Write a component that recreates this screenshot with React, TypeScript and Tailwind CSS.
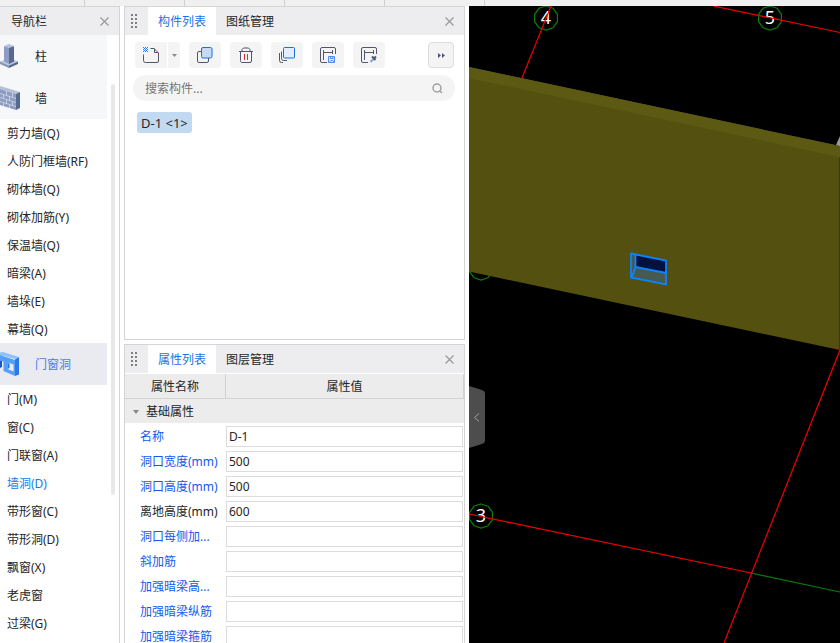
import { useState } from "react";
import type { ReactNode } from "react";
import clsx from "clsx";

type NavEntry = { label: string; icon?: ReactNode };

type Property = { label: string; value: string; plain?: boolean };

function ColumnIcon() {
  return (
    <svg viewBox="0 0 20 26" className="h-[26px] w-5 shrink-0" aria-hidden="true">
      <path d="M0 18.5 9 15l9 3.5-9 4z" fill="#bcc6dc" />
      <path d="M0 18.5 9 22.5V25L0 21z" fill="#8795b8" />
      <path d="M18 18.5 9 22.5V25l9-4z" fill="#566a91" />
      <path d="M4 3v15.5l5 2.500V4.5z" fill="#8d9cc0" />
      <path d="M14 3v15.5L9 21V4.5z" fill="#566a91" />
      <path d="M4 3l5-2 5 2-5 2z" fill="#b5c0da" />
    </svg>
  );
}

function WallIcon() {
  return (
    <svg viewBox="0 0 20 26" className="h-[26px] w-5 shrink-0" aria-hidden="true">
      <path d="M0 1 20 7l-4 2L0 4z" fill="#b5bfd6" />
      <path d="M0 4l16 5v16L0 20z" fill="#8d9cc0" />
      <path d="M20 7l-4 2v16l4-2z" fill="#566a91" />
      <path
        d="M0 8.500l16 5M0 12.500l16 5M0 16.500l16 5M6.500 6v4.500M12.500 8v4.500M3.500 9.500V14M9.500 11.500V16M6.500 14.500V19M12.500 16.500V21M3.500 17.500V21M9.500 19.500V23"
        stroke="#c3cce0"
        strokeWidth="1"
        fill="none"
      />
    </svg>
  );
}

function OpeningIcon() {
  return (
    <svg viewBox="0 0 20 26" className="h-[26px] w-5 shrink-0" aria-hidden="true">
      <path d="M0 1.500l3-.5 16 5-4 2L0 4z" fill="#8fc1fb" />
      <path
        d="M0 4l15 5v16L3.500 20V10.500L0 9.500zM7.500 11.500v6.500l6 2.500V13.500z"
        fill="#559ff6"
        fillRule="evenodd"
      />
      <path d="M19 6l-4 2.500V25l4-1.500z" fill="#2779ea" />
      <path d="M0 9.500l2 .500v6l-2 1z" fill="#1557cf" />
      <path d="M7.500 11.500l2 1.500v4l-2 1z" fill="#2475e8" />
    </svg>
  );
}

function NewIcon() {
  return (
    <svg viewBox="0 0 16 16" className="h-4 w-4" fill="none" aria-hidden="true">
      <path d="M.5 7.500v6a2 2 0 0 0 2 2H14a1.500 1.500 0 0 0 1.500-1.500V6L11 1.500H7.500" stroke="#4f566e" />
      <path d="M11.500 1.500V5.500H15" stroke="#4f566e" />
      <path d="M0 .5h5M0 2.500h5M0 4.500h5" stroke="#2b7fe8" strokeDasharray="1 1" />
      <path d="M1 1.500h4M1 3.500h4" stroke="#2b7fe8" strokeDasharray="1 1" />
    </svg>
  );
}

function CopyIcon() {
  return (
    <svg viewBox="0 0 16 16" className="h-4 w-4" fill="none" aria-hidden="true">
      <rect x=".5" y="4.500" width="11" height="11" rx="1.500" stroke="#4f566e" />
      <rect x="4.500" y=".5" width="10.500" height="10.500" rx="1.500" fill="#c7d9f5" stroke="#1a6fe0" />
    </svg>
  );
}

function TrashIcon() {
  return (
    <svg viewBox="0 0 16 16" className="h-4 w-4" fill="none" aria-hidden="true">
      <path
        d="M1 4.500h14M4 4V2.500L5.500 1h5L12 2.500V4M2.500 4.500v9A1.500 1.500 0 0 0 4 15.500h8a1.500 1.500 0 0 0 1.500-1.500V4.500"
        stroke="#4f566e"
      />
      <path d="M6.500 7v6M9.500 7v6" stroke="#e02a35" />
    </svg>
  );
}

function LayersIcon() {
  return (
    <svg viewBox="0 0 16 16" className="h-4 w-4" fill="none" aria-hidden="true">
      <path d="M.5 6v7.500a2 2 0 0 0 2 2H4M2.500 4.500v7a2 2 0 0 0 2 2H8" stroke="#4f566e" />
      <rect x="4.500" y=".5" width="11" height="10.500" rx="1" fill="#e3edfb" stroke="#1a6fe0" />
    </svg>
  );
}

function SaveIcon() {
  return (
    <svg viewBox="0 0 16 16" className="h-4 w-4" fill="none" aria-hidden="true">
      <path d="M7 15.500H2A1.500 1.500 0 0 1 .5 14V2A1.500 1.500 0 0 1 2 .5h12A1.500 1.500 0 0 1 15.500 2v5" stroke="#4f566e" />
      <path d="M3.500 3v10M3.500 5.500h8.500M12.500 3v4" stroke="#4f566e" />
      <path d="M8.500 9.500h6v6h-6z" fill="#dbe9fc" stroke="#4a90ee" />
      <path d="M10.500 9.500v2h2.500v-2M9.500 15l1.500-1.500h1.500L14 15" stroke="#4a90ee" />
    </svg>
  );
}

function PickIcon() {
  return (
    <svg viewBox="0 0 16 16" className="h-4 w-4" fill="none" aria-hidden="true">
      <path d="M7 15.500H2A1.500 1.500 0 0 1 .5 14V2A1.500 1.500 0 0 1 2 .5h12A1.500 1.500 0 0 1 15.500 2v5" stroke="#4f566e" />
      <path d="M3.500 3v10M3.500 5.500h8.500M12.500 3v4" stroke="#4f566e" />
      <path d="M9.500 15l4-4" stroke="#7fa6dc" strokeWidth="2" />
      <path d="M11 9.500l3.500 3.500M13 11.500l2-2" stroke="#4f566e" strokeWidth="2" />
    </svg>
  );
}

function CloseIcon() {
  return (
    <svg viewBox="0 0 9 9" className="h-[9px] w-[9px]" aria-hidden="true">
      <path d="M.5 .5l8 8M8.500 .5l-8 8" stroke="#999" strokeWidth="1.200" />
    </svg>
  );
}

function Grip() {
  return (
    <svg viewBox="0 0 6 14" className="h-[14px] w-[6px]" fill="#808080" aria-hidden="true">
      {[0, 4, 8, 12].map((y) => (
        <g key={y}>
          <rect x="0" y={y} width="2" height="2" />
          <rect x="4" y={y} width="2" height="2" />
        </g>
      ))}
    </svg>
  );
}

const wallItems = [
  "剪力墙(Q)",
  "人防门框墙(RF)",
  "砌体墙(Q)",
  "砌体加筋(Y)",
  "保温墙(Q)",
  "暗梁(A)",
  "墙垛(E)",
  "幕墙(Q)",
];

const openingItems = [
  "门(M)",
  "窗(C)",
  "门联窗(A)",
  "墙洞(D)",
  "带形窗(C)",
  "带形洞(D)",
  "飘窗(X)",
  "老虎窗",
  "过梁(G)",
];

const navEntries: NavEntry[] = [
  { label: "柱", icon: <ColumnIcon /> },
  { label: "墙", icon: <WallIcon /> },
  ...wallItems.map((label) => ({ label })),
  { label: "门窗洞", icon: <OpeningIcon /> },
  ...openingItems.map((label) => ({ label })),
];

const tools = [
  { label: "复制", icon: <CopyIcon /> },
  { label: "删除", icon: <TrashIcon /> },
  { label: "层间复制", icon: <LayersIcon /> },
  { label: "存档", icon: <SaveIcon /> },
  { label: "提取", icon: <PickIcon /> },
];

const properties: Property[] = [
  { label: "名称", value: "D-1" },
  { label: "洞口宽度(mm)", value: "500" },
  { label: "洞口高度(mm)", value: "500" },
  { label: "离地高度(mm)", value: "600", plain: true },
  { label: "洞口每侧加...", value: "" },
  { label: "斜加筋", value: "" },
  { label: "加强暗梁高...", value: "" },
  { label: "加强暗梁纵筋", value: "" },
  { label: "加强暗梁箍筋", value: "" },
];

function Sidebar() {
  const [current, setCurrent] = useState("墙洞(D)");

  return (
    <aside className="flex w-[120px] shrink-0 flex-col border-t border-r border-[#d4d4d4]">
      <div className="flex h-7 shrink-0 items-center justify-between bg-[#ededef] pr-[10px] pl-[11px]">
        <h2 className="pt-0.5">导航栏</h2>
        <button type="button" aria-label="关闭导航栏">
          <CloseIcon />
        </button>
      </div>
      <div className="flex min-h-0 flex-1">
        <nav className="min-w-0 flex-1 overflow-hidden">
          {navEntries.map((n) =>
            n.icon ? (
              <button
                key={n.label}
                type="button"
                className={clsx(
                  "flex h-[42px] w-full items-center gap-[15px]",
                  n.label === "门窗洞" ? "bg-[#eaebf0] text-[#4a7fe0]" : "bg-[#f5f7f9]",
                )}
              >
                {n.icon}
                <span className="pt-0.5">{n.label}</span>
              </button>
            ) : (
              <button
                key={n.label}
                type="button"
                onClick={() => setCurrent(n.label)}
                className={clsx(
                  "flex h-7 w-full items-center pt-0.5 pl-[7px] whitespace-nowrap",
                  n.label === current && "text-[#0f7bf5]",
                )}
              >
                {n.label}
              </button>
            ),
          )}
        </nav>
        <div className="w-3 px-1 pt-[49px]">
          <div className="h-[411px] w-1 rounded-full bg-[#e8e8e8]" />
        </div>
      </div>
    </aside>
  );
}

function PanelTabs({ tabs }: { tabs: string[] }) {
  const [active, setActive] = useState(tabs[0]);

  return (
    <div className="flex h-7 shrink-0 items-stretch bg-[#ededf0]">
      <div className="flex w-[23px] items-center pl-[6px]">
        <Grip />
      </div>
      <div role="tablist" className="flex">
        {tabs.map((t) => (
          <button
            key={t}
            type="button"
            role="tab"
            aria-selected={t === active}
            onClick={() => setActive(t)}
            className={clsx("px-[10px] pt-0.5", t === active && "bg-white text-[#1a73e8]")}
          >
            {t}
          </button>
        ))}
      </div>
      <button type="button" aria-label="关闭" className="ml-auto pr-[10px]">
        <CloseIcon />
      </button>
    </div>
  );
}

function ComponentPanel() {
  return (
    <section className="flex min-h-0 flex-col border border-[#d4d4d4]">
      <PanelTabs tabs={["构件列表", "图纸管理"]} />
      <div className="flex gap-[9px] px-[10px] pt-[7px]">
        <div className="flex gap-px">
          <button
            type="button"
            aria-label="新建"
            className="flex h-[26px] w-8 items-center justify-center rounded-l bg-[#f4f4f4]"
          >
            <NewIcon />
          </button>
          <button
            type="button"
            aria-label="新建选项"
            className="flex h-[26px] w-3 items-center justify-center rounded-r bg-[#f4f4f4]"
          >
            <svg viewBox="0 0 5 3" className="h-[3px] w-[5px]" aria-hidden="true">
              <path d="M0 0h5L2.500 3z" fill="#888" />
            </svg>
          </button>
        </div>
        {tools.map((t) => (
          <button
            key={t.label}
            type="button"
            aria-label={t.label}
            className="flex h-[26px] w-8 items-center justify-center rounded bg-[#f4f4f4]"
          >
            {t.icon}
          </button>
        ))}
        <button
          type="button"
          aria-label="更多"
          className="ml-auto flex h-[26px] w-[26px] items-center justify-center rounded border border-[#dcdcdc] bg-[#f4f4f4]"
        >
          <svg viewBox="0 0 7 5" className="h-[5px] w-[7px]" fill="#4f566e" aria-hidden="true">
            <path d="M0 0l3 2.500L0 5zM4 0l3 2.500L4 5z" />
          </svg>
        </button>
      </div>
      <label className="mt-[7px] mr-[9px] ml-2 flex h-[26px] items-center rounded-full bg-[#f4f4f4] px-3">
        <input
          type="text"
          aria-label="搜索构件"
          placeholder="搜索构件..."
          className="min-w-0 flex-1 bg-transparent pt-0.5 outline-none placeholder:text-[#757575]"
        />
        <svg viewBox="0 0 11 11" className="h-[11px] w-[11px]" fill="none" aria-hidden="true">
          <circle cx="5" cy="5" r="4" stroke="#a0a0a0" strokeWidth="1.500" />
          <path d="M7.500 7.500L10 10" stroke="#a0a0a0" strokeWidth="1.500" />
        </svg>
      </label>
      <ul className="px-3 pt-[11px]">
        <li className="flex">
          <button type="button" className="h-[21px] rounded-[3px] bg-[#c1d9f1] px-1 text-[13px] leading-5">
            D-1 &lt;1&gt;
          </button>
        </li>
      </ul>
    </section>
  );
}

function PropertyPanel() {
  return (
    <section className="flex min-h-0 flex-col overflow-hidden border border-b-0 border-[#d4d4d4]">
      <PanelTabs tabs={["属性列表", "图层管理"]} />
      <table className="mt-px w-full table-fixed border-separate border-spacing-0">
        <colgroup>
          <col className="w-[101px]" />
          <col />
        </colgroup>
        <thead>
          <tr className="h-[25px] bg-[#ececec]">
            <th className="border-r border-b border-[#d2d2d2] p-0 pt-0.5 font-normal">属性名称</th>
            <th className="border-r border-b border-[#d2d2d2] p-0 pt-0.5 font-normal">属性值</th>
          </tr>
        </thead>
        <tbody>
          <tr className="h-[25px]">
            <th colSpan={2} className="border-b border-white bg-[#ececec] p-0 pt-0.5 text-left font-normal">
              <button type="button" className="flex items-center gap-[7px] pl-2">
                <svg viewBox="0 0 6 4" className="h-1 w-[6px]" aria-hidden="true">
                  <path d="M0 0h6L3 4z" fill="#888" />
                </svg>
                基础属性
              </button>
            </th>
          </tr>
          {properties.map((p, i) => (
            <tr key={p.label} className="h-[25px]">
              <th
                className={clsx(
                  "p-0 pl-[15px] text-left font-normal whitespace-nowrap",
                  !p.plain && "text-[#1458f0]",
                )}
              >
                <label htmlFor={`prop-${i}`}>{p.label}</label>
              </th>
              <td className="p-0 pr-px">
                <input
                  id={`prop-${i}`}
                  type="text"
                  defaultValue={p.value}
                  className="block h-[21px] w-full border border-[#dcdcdc] bg-white px-[2px] outline-none"
                />
              </td>
            </tr>
          ))}
        </tbody>
      </table>
    </section>
  );
}

function AxisRing({ x, y }: { x: number; y: number }) {
  return (
    <path
      transform={`translate(${x} ${y})`}
      d="M0-12L7-9.700 11.400-3.700V3.700L7 9.700 0 12-7 9.700-11.400 3.700V-3.700L-7-9.700z"
      stroke="#0a7d0a"
      strokeWidth="1.200"
      fill="none"
    />
  );
}

function ModelView() {
  return (
    <main className="relative min-w-0 flex-1 overflow-hidden bg-black">
      <svg
        viewBox="0 0 371 637"
        preserveAspectRatio="xMinYMin slice"
        className="block h-full w-full"
        role="img"
        aria-label="三维模型"
      >
        <g fill="#fff" fontSize="18" textAnchor="middle">
          <text x="77" y="18">4</text>
          <text x="301" y="18">5</text>
          <text x="12" y="516">3</text>
        </g>
        <AxisRing x={77} y={12} />
        <AxisRing x={301} y={12} />
        <AxisRing x={12} y={510} />
        <AxisRing x={12} y={262} />

        <g stroke="#f00000" strokeWidth="1.200" fill="none">
          <path d="M82 0L53 72" />
          <path d="M244 0L371 26.500" />
          <path d="M371 344L255 637" />
          <path d="M0 508L282 567" />
        </g>
        <path d="M282 567L371 586" stroke="#0a7d0a" strokeWidth="1.200" />

        {/* wall */}
        <path d="M367 139l4-9v11z" fill="#9a9a9a" />
        <path d="M0 61l371 79v204L0 265.500z" fill="#545110" />
        <path d="M0 61l371 79v11L0 72z" fill="#5c5a12" />
        <path d="M370.500 151v193" stroke="#3d3b0a" />

        {/* selected opening */}
        <path d="M162 247l35.500 7.500v24L162 271.500z" fill="#465a50" />
        <path d="M167 248l30.500 6.500V267L167 261z" fill="#02123f" />
        <path
          d="M162 247.500l35 7v24l-35-7zM166.500 248.500V261l30.500 6M166.500 261l-3.500 10"
          stroke="#0a84ff"
          strokeWidth="1.800"
          fill="none"
        />
      </svg>
      <button type="button" aria-label="收起面板" className="absolute top-[380px] left-0">
        <svg viewBox="0 0 16 62" className="h-[62px] w-4" fill="none" aria-hidden="true">
          <path d="M0 0l13 4q3 1 3 3v48q0 2-3 3L0 62z" fill="#4d4d4d" />
          <path d="M10 27.500L5.500 31.500l4.500 4" stroke="#a0a0a0" />
        </svg>
      </button>
    </main>
  );
}

export default function App() {
  return (
    <div className="flex h-screen flex-col overflow-hidden bg-white font-['Noto_Sans','Noto_Sans_CJK_SC',sans-serif] text-xs text-[#262626]">
      <div className="flex h-[6px] shrink-0 bg-[#f0f0f0]">
        <div className="w-[85px] border-r border-[#d0d0d0]" />
        {[1, 2, 3, 4].map((n) => (
          <div key={n} className="w-[100px] border-r border-[#d0d0d0]" />
        ))}
      </div>
      <div className="flex min-h-0 flex-1 gap-1">
        <Sidebar />
        <div className="grid w-[341px] shrink-0 grid-rows-[334fr_299fr] gap-1">
          <ComponentPanel />
          <PropertyPanel />
        </div>
        <ModelView />
      </div>
    </div>
  );
}
